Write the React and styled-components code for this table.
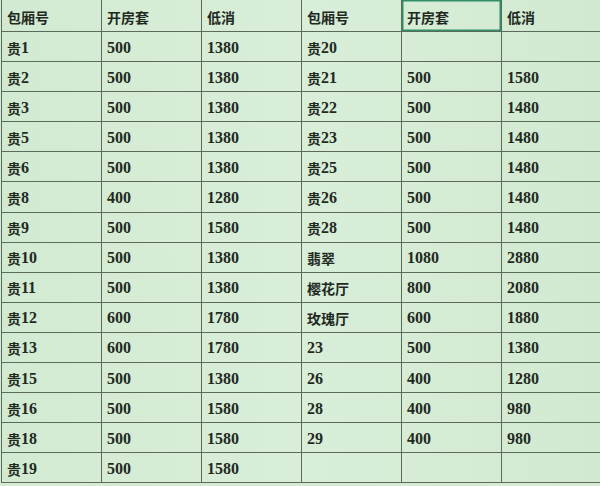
import styled, { createGlobalStyle } from "styled-components";

const GlobalStyle = createGlobalStyle`
  html, body {
    margin: 0;
    padding: 0;
    background: #d5ebd4;
  }
`;

const rows = [
  ["贵1", "500", "1380", "贵20", "", ""],
  ["贵2", "500", "1380", "贵21", "500", "1580"],
  ["贵3", "500", "1380", "贵22", "500", "1480"],
  ["贵5", "500", "1380", "贵23", "500", "1480"],
  ["贵6", "500", "1380", "贵25", "500", "1480"],
  ["贵8", "400", "1280", "贵26", "500", "1480"],
  ["贵9", "500", "1580", "贵28", "500", "1480"],
  ["贵10", "500", "1380", "翡翠", "1080", "2880"],
  ["贵11", "500", "1380", "樱花厅", "800", "2080"],
  ["贵12", "600", "1780", "玫瑰厅", "600", "1880"],
  ["贵13", "600", "1780", "23", "500", "1380"],
  ["贵15", "500", "1380", "26", "400", "1280"],
  ["贵16", "500", "1580", "28", "400", "980"],
  ["贵18", "500", "1580", "29", "400", "980"],
  ["贵19", "500", "1580", "", "", ""],
];

const headers = ["包厢号", "开房套", "低消", "包厢号", "开房套", "低消"];

// chinese and digits come from different fonts, so size them apart
function Label({ text }) {
  return text
    .split(/([\u4e00-\u9fff]+)/)
    .filter(Boolean)
    .map((part, i) =>
      /[\u4e00-\u9fff]/.test(part) ? <Han key={i}>{part}</Han> : <span key={i}>{part}</span>
    );
}

function App() {
  return (
    <>
      <GlobalStyle />
      <Sheet>
        {headers.map((h, i) => (
          <Cell key={"h" + i} $head $selected={i === 4}>
            <Label text={h} />
          </Cell>
        ))}
        {rows.map((r, i) =>
          r.map((v, j) => (
            <Cell key={i + "-" + j}>
              <Label text={v} />
            </Cell>
          ))
        )}
      </Sheet>
    </>
  );
}

export default App;

const Sheet = styled.div`
  display: grid;
  grid-template-columns: repeat(6, 100px);
  grid-template-rows: 32px repeat(15, 30.1px);
  width: 600px;
  margin-left: 1px;
  border-left: 1.5px solid #5b6a5b;
  background: linear-gradient(90deg, #d3ead2 0%, #d9eed8 50%, #d2e9d1 100%);
`;

const Cell = styled.div`
  position: relative;
  display: flex;
  align-items: center;
  box-sizing: border-box;
  padding: 2px 0 0 5px;
  border-right: 1.5px solid #5b6a5b;
  border-bottom: 1.5px solid #5b6a5b;
  font-family: "Liberation Serif", "Noto Sans CJK SC", serif;
  font-weight: 700;
  font-size: 16px;
  line-height: 1;
  color: #1f2a1f;
  white-space: nowrap;
  overflow: hidden;
  ${(p) => p.$selected && "box-shadow: inset 0 0 0 1.5px #2f8f66;"}
`;

const Han = styled.span`
  font-family: "Noto Sans CJK SC", sans-serif;
  font-size: 14px;
  font-weight: 700;
  letter-spacing: 0;
`;
